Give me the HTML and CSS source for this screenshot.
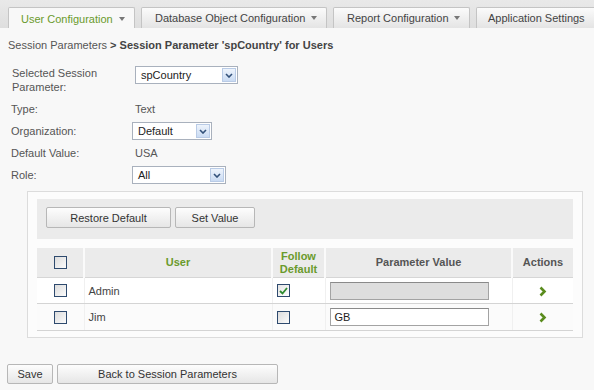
FILE: index.html
```html
<!DOCTYPE html>
<html lang="en">
<head>
    <meta charset="UTF-8">
    <title>Session Parameter</title>
    <link rel="stylesheet" href="styles.css">
</head>
<body>

    <div class="tabbar">
        <div class="tab active tab-user">User Configuration <span class="caret"></span></div>
        <div class="tab tab-db">Database Object Configuration <span class="caret"></span></div>
        <div class="tab tab-report">Report Configuration <span class="caret"></span></div>
        <div class="tab tab-app">Application Settings</div>
    </div>

    <div class="crumbs">
        Session Parameters <b>&gt; Session Parameter 'spCountry' for Users</b>
    </div>

    <div class="form">
        <div class="label first">Selected Session Parameter:</div>
        <div class="value first">
            <div class="select sel-param"><span>spCountry</span><i class="drop"><svg width="8" height="5" viewBox="0 0 8 5"><polyline points="1,1 4,4 7,1" fill="none" stroke="#33517a" stroke-width="1.6"/></svg></i></div>
        </div>

        <div class="label">Type:</div>
        <div class="value text">Text</div>

        <div class="label">Organization:</div>
        <div class="value">
            <div class="select sel-org"><span>Default</span><i class="drop"><svg width="8" height="5" viewBox="0 0 8 5"><polyline points="1,1 4,4 7,1" fill="none" stroke="#33517a" stroke-width="1.6"/></svg></i></div>
        </div>

        <div class="label">Default Value:</div>
        <div class="value text">USA</div>

        <div class="label">Role:</div>
        <div class="value">
            <div class="select sel-role"><span>All</span><i class="drop"><svg width="8" height="5" viewBox="0 0 8 5"><polyline points="1,1 4,4 7,1" fill="none" stroke="#33517a" stroke-width="1.6"/></svg></i></div>
        </div>
    </div>

    <div class="panel">
        <div class="toolbar">
            <button class="btn btn-restore">Restore Default</button>
            <button class="btn btn-set">Set Value</button>
        </div>

        <table class="grid">
            <colgroup>
                <col style="width:47px">
                <col style="width:188px">
                <col style="width:53px">
                <col style="width:187px">
                <col style="width:61px">
            </colgroup>
            <thead>
                <tr>
                    <th><span class="check"></span></th>
                    <th class="green">User</th>
                    <th class="green">Follow Default</th>
                    <th>Parameter Value</th>
                    <th>Actions</th>
                </tr>
            </thead>
            <tbody>
                <tr class="row1">
                    <td class="c"><span class="check"></span></td>
                    <td>Admin</td>
                    <td><span class="check on"><svg width="9" height="8" viewBox="0 0 9 8"><polyline points="1,4 3.5,6.5 8,1" fill="none" stroke="#2e8b2e" stroke-width="1.8"/></svg></span></td>
                    <td><div class="field off"></div></td>
                    <td class="c"><svg class="go" width="9" height="11" viewBox="0 0 9 11"><polyline points="2.5,1.5 6.5,5.5 2.5,9.5" fill="none" stroke="#5a8c1e" stroke-width="2.6"/></svg></td>
                </tr>
                <tr class="row2">
                    <td class="c"><span class="check"></span></td>
                    <td>Jim</td>
                    <td><span class="check"></span></td>
                    <td><div class="field">GB</div></td>
                    <td class="c"><svg class="go" width="9" height="11" viewBox="0 0 9 11"><polyline points="2.5,1.5 6.5,5.5 2.5,9.5" fill="none" stroke="#5a8c1e" stroke-width="2.6"/></svg></td>
                </tr>
            </tbody>
        </table>
    </div>

    <div class="actions">
        <button class="btn btn-save">Save</button>
        <button class="btn btn-back">Back to Session Parameters</button>
    </div>

</body>
</html>
```

FILE: styles.css
```css
body {
    margin: 0;
    padding: 0;
    background: #f8f8f8;
    font-family: "Liberation Sans", Arial, sans-serif;
    font-size: 11px;
    color: #444;
}

/* top tabs */
.tabbar {
    height: 28px;
    display: flex;
    align-items: flex-end;
    gap: 6px;
    padding-left: 8px;
    background: linear-gradient(to bottom, #e9e9e9, #dedede);
    overflow: hidden;
}

.tab {
    height: 21px;
    box-sizing: border-box;
    display: flex;
    align-items: center;
    justify-content: space-between;
    padding: 0 9px 0 13px;
    border: 1px solid #c4c4c4;
    border-bottom: none;
    border-radius: 2px 2px 0 0;
    background: linear-gradient(to bottom, #fbfbfb, #e4e4e4);
    color: #444;
    font-size: 11px;
    white-space: nowrap;
    flex-shrink: 0;
}

.tab.active {
    background: #f8f8f8;
    color: #6a9a2c;
    padding-left: 12px;
    height: 22px;
    margin-bottom: -1px;
}

.tab-user { width: 127px; }
.tab-db { width: 186px; }
.tab-report { width: 137px; }
.tab-app { width: 125px; padding-left: 11px; }

.caret {
    width: 0;
    height: 0;
    border-left: 3.5px solid transparent;
    border-right: 3.5px solid transparent;
    border-top: 4px solid #777;
}

/* breadcrumb */
.crumbs {
    margin: 10px 0 0 8px;
    line-height: 14px;
    color: #555;
}

.crumbs b {
    color: #444;
}

/* form */
.form {
    display: grid;
    grid-template-columns: 120px 1fr;
    grid-template-rows: 32px 22px 22px 22px 22px;
    margin: 14px 0 0 11px;
}

.label {
    color: #555;
    line-height: 14px;
    display: flex;
    align-items: center;
}

.label.first {
    padding-left: 1px;
    align-items: flex-start;
}

.value {
    display: flex;
    align-items: center;
    padding-left: 1px;
}

.value.text {
    padding-left: 4px;
    color: #555;
}

.value.first {
    align-items: flex-start;
    padding-left: 4px;
}

.select {
    height: 18px;
    box-sizing: border-box;
    border: 1px solid #a9b1bd;
    background: #fff;
    display: flex;
    align-items: center;
    justify-content: space-between;
    padding: 1px 1px 1px 5px;
    color: #222;
}

.sel-param { width: 103px; }
.sel-org { width: 80px; }
.sel-role { width: 94px; }

.drop {
    width: 14px;
    height: 14px;
    box-sizing: border-box;
    border: 1px solid #b9cbe6;
    background: linear-gradient(to bottom, #eef4fc, #cadbf3);
    display: flex;
    align-items: center;
    justify-content: center;
}

/* panel with grid */
.panel {
    margin: 5px 11px 0 27px;
    width: 556px;
    box-sizing: border-box;
    border: 1px solid #dcdcdc;
    background: #fcfcfc;
    padding: 7px 9px 6px 9px;
}

.toolbar {
    height: 40px;
    box-sizing: border-box;
    background: #ebebeb;
    padding: 8px 9px;
    display: flex;
    gap: 4px;
}

.btn {
    height: 21px;
    box-sizing: border-box;
    border: 1px solid #b7b7b7;
    border-radius: 2px;
    background: linear-gradient(to bottom, #fdfdfd, #e6e6e6);
    font-family: "Liberation Sans", Arial, sans-serif;
    font-size: 11px;
    color: #333;
    padding: 0;
}

.btn-restore { width: 125px; }
.btn-set { width: 80px; }

.grid {
    margin-top: 9px;
    width: 536px;
    table-layout: fixed;
    border-collapse: collapse;
}

.grid th {
    height: 29px;
    background: #ebebeb;
    font-weight: bold;
    color: #555;
    line-height: 13px;
    border-left: 2px solid #fafafa;
    border-bottom: 1px solid #d6d6d6;
    padding: 0;
    text-align: center;
}

.grid th:first-child {
    border-left: none;
}

.grid th.green {
    color: #6a9a2c;
}

.grid td {
    padding: 0 0 0 4px;
    color: #444;
    border-bottom: 1px solid #d4d4d4;
    border-left: 1px solid #f0f0f0;
    background: #fff;
}

.grid td:first-child {
    border-left: none;
}

.grid td.c {
    text-align: center;
    padding: 0;
}

.row1 td { height: 25px; }
.row2 td { height: 26px; background: #fbfbfb; }

.check {
    display: inline-flex;
    align-items: center;
    justify-content: center;
    width: 13px;
    height: 13px;
    box-sizing: border-box;
    border: 1px solid #2e4a6e;
    background: linear-gradient(135deg, #dcdcdc, #fbfbfb);
    vertical-align: middle;
}

.check.on {
    background: linear-gradient(135deg, #e4e4e4, #fdfdfd);
}

.field {
    width: 159px;
    height: 18px;
    box-sizing: border-box;
    border: 1px solid #a3a3a3;
    border-top-color: #8a8a8a;
    background: #fff;
    padding: 2px 4px;
    line-height: 12px;
    color: #222;
}

.field.off {
    background: #dedede;
}

.go {
    vertical-align: middle;
}

/* bottom buttons */
.actions {
    display: flex;
    gap: 4px;
    margin: 26px 0 0 7px;
}

.btn-save { width: 46px; height: 20px; }
.btn-back { width: 221px; height: 20px; }
```
